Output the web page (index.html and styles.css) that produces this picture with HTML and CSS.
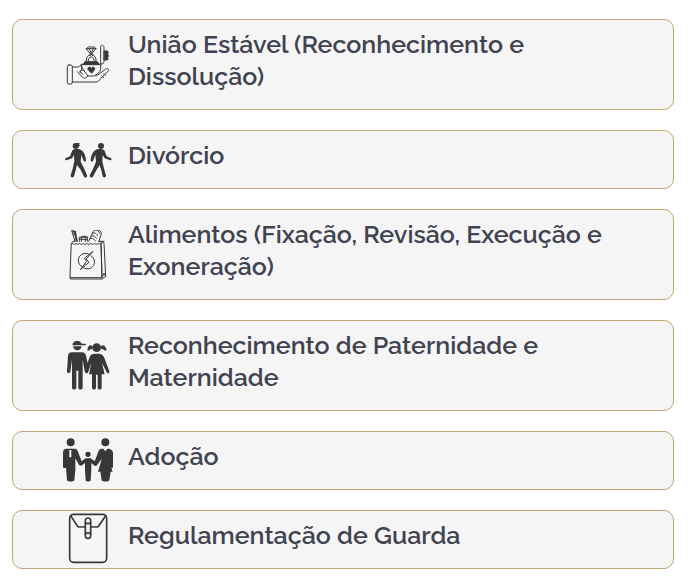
FILE: index.html
```html
<!DOCTYPE html>
<html lang="pt-BR">

<head>
    <meta charset="UTF-8">
    <meta name="viewport" content="width=device-width, initial-scale=1">
    <title>Direito de Família</title>
    <link rel="stylesheet" href="styles.css">
</head>

<body>
    <ul class="servicos">
        <li class="servico">
            <!-- mão com caixa de aliança -->
            <svg class="icone traco" viewBox="24 16 150 150" aria-hidden="true">
                <rect x="37" y="91" width="15" height="57" rx="5" />
                <path d="M52 97H70L81 89M52 142H126C133 139 136 132 141 127L159 110C163 104 158 99 152 103L134 117C129 121 122 124 111 124H97" />
                <path d="M67 111L83 128C90 134 101 127 96 119L87 109C81 104 76 106 75 112L83 118M75 112C78 106 83 103 79 95" />
                <path d="M79 89H137V104C135 113 129 118 122 121M79 89C80 98 83 103 88 108" />
                <path class="cheio" d="M85 89L90 81H127L133 89Z" />
                <path d="M94 79A15 15 0 1 1 123 79M100 79A9 9 0 1 1 117 79" />
                <path d="M94 42L100 37H117L123 42L109 58ZM94 42H123M102 42L109 56L115 42M105 58V63M113 58V63" />
                <path class="cheio" d="M109 115L100 106C95 98 105 94 109 101C113 94 123 98 118 106Z" />
                <path d="M137 88V35C139 29 147 32 147 39V81C147 87 143 88 137 88Z" />
                <path class="cheio" d="M148 49H157C161 50 160 56 157 59C162 62 162 66 157 68C161 72 159 76 156 76H148Z" />
                <path d="M140 124L146 129M146 118L152 122" />
            </svg>
            <h3 class="titulo">União Estável (Reconhecimento e Dissolução)</h3>
        </li>

        <li class="servico">
            <!-- casal se afastando -->
            <svg class="icone" viewBox="24 2 150 150" aria-hidden="true">
                <circle cx="62" cy="35" r="9" />
                <path d="M60 26H74L72 31L76 33L69 38Z" />
                <path d="M52 48C58 43 72 42 78 47C88 53 91 64 93 76C94 82 87 84 85 78L79 61L77 82L87 102L96 123C98 130 90 132 87 127L77 106L66 92L62 108L57 126C55 131 46 130 47 123L53 103L58 81L57 62L51 72L35 78C30 79 28 73 33 71L45 66Z" />
                <circle cx="138" cy="35" r="9" />
                <path d="M148 48C142 43 128 42 122 47C112 53 109 64 107 76C106 82 113 84 115 78L121 61L123 82L115 102L105 121C102 129 110 132 114 127L124 108L134 92L139 108L143 126C145 131 154 130 153 123L147 103L142 81L143 62L149 72L165 78C170 79 172 73 167 71L155 66Z" />
            </svg>
            <h3 class="titulo">Divórcio</h3>
        </li>

        <li class="servico">
            <!-- sacola de compras -->
            <svg class="icone traco" viewBox="24 25 150 150" aria-hidden="true">
                <path d="M50 65H53C55 69 60 69 63 65C66 69 71 69 74 65C77 69 82 69 85 65C88 69 93 69 96 65C99 69 104 69 107 65C110 69 115 69 118 65C121 69 126 69 129 65C132 69 135 67 138 65L141 168H46Z" />
                <path d="M46 168V172H142L152 164L147 64L138 59L141 168L147 155L152 164M50 65L54 59H59M131 59H147" />
                <path d="M60 59L50 26L55 25L66 59M56 39L61 29L63 59M61 29L67 59M52 31L60 29" />
                <path d="M73 59V47H97V59M77 47L81 44H94L98 47M73 53H97M79 50V59M91 50V59" />
                <path d="M101 59L115 29C122 19 139 25 139 36L132 59M112 35C120 31 125 37 128 42M109 43C116 40 121 45 124 50M106 51C113 48 119 53 121 58M120 25C128 24 132 29 134 35" />
                <path d="M103 98A21 21 0 0 0 80 135M86 139A21 21 0 0 0 108 102" />
                <path d="M113 90L88 110L95 119L76 144L102 122L94 113Z" />
            </svg>
            <h3 class="titulo">Alimentos (Fixação, Revisão, Execução e Exoneração)</h3>
        </li>

        <li class="servico">
            <!-- menino e menina -->
            <svg class="icone" viewBox="24 28 150 150" aria-hidden="true">
                <path d="M52 41C53 33 58 29 63 28C64 24 69 24 70 28C75 29 79 33 80 36H91C94 37 93 41 89 41Z" />
                <path d="M54 44H80C78 60 56 60 54 44Z" />
                <path d="M49 62H83C89 63 92 67 93 72L98 94L104 75C107 69 112 66 119 66H134C141 67 144 71 147 76L163 119C165 125 158 128 155 122L141 94L149 128H140V168C140 175 128 175 128 168V129H123V168C123 175 111 175 111 168V128H102L109 93L100 120C98 127 90 126 89 119L83 84V168C83 175 70 175 70 168V117H64V168C64 175 51 175 51 168V84L46 120C44 127 35 125 36 118L39 73C40 66 43 63 49 62Z" />
                <circle cx="125" cy="48" r="13" />
                <path d="M113 44C105 36 98 42 97 56C101 60 104 51 113 51ZM137 44C145 36 152 42 155 56C150 60 146 51 137 51Z" />
            </svg>
            <h3 class="titulo">Reconhecimento de Paternidade e Maternidade</h3>
        </li>

        <li class="servico">
            <!-- família de mãos dadas -->
            <svg class="icone" viewBox="24 18 150 150" aria-hidden="true">
                <circle cx="47" cy="37" r="12" />
                <circle cx="99" cy="73" r="8" />
                <circle cx="151" cy="37" r="12" />
                <path fill-rule="evenodd" d="M32 56H61C66 57 68 62 70 68L80 94L92 85H107L119 94L130 65C132 59 135 56 140 56H162C168 57 173 60 174 68V113H169L173 125H167L163 151C162 156 141 156 140 151L136 125H129L140 87L126 106C123 109 119 108 116 105L109 99V121L107 151C106 156 93 156 92 151L90 121V99L83 104C78 109 74 107 72 104L61 85V120L58 151C57 156 37 156 36 151L33 114H27C24 114 24 112 24 109V68C24 61 27 57 32 56ZM43 60V82H49V60Z" />
                <path class="fundo" d="M144 55L151 64L158 55Z" />
            </svg>
            <h3 class="titulo">Adoção</h3>
        </li>

        <li class="servico">
            <!-- envelope -->
            <svg class="icone traco grosso" viewBox="24 26 150 150" overflow="visible" aria-hidden="true">
                <rect x="44" y="24" width="111" height="144" rx="12" />
                <path d="M47 28L67 59Q69 62 73 62H91M107 62H125Q129 62 131 59L152 28" />
                <rect x="91" y="35" width="16" height="61" rx="8" />
                <path d="M91 49Q99 55 107 49M91 83Q99 76 107 83" />
            </svg>
            <h3 class="titulo">Regulamentação de Guarda</h3>
        </li>
    </ul>
</body>

</html>
```
FILE: styles.css
```css
body {
    margin: 0;
    padding: 19px 20px 19px 12px;
    background-color: #ffffff;
    font-family: Raleway, Lato, sans-serif;
}

.servicos {
    display: flex;
    flex-direction: column;
    gap: 20px;
    margin: 0;
    padding: 0;
    list-style: none;
}

.servico {
    display: flex;
    align-items: center;
    gap: 15px;
    padding: 0 50px;
    background-color: #f5f5f5;
    border: 1px solid #bfa872;
    border-radius: 10px;
}

.icone {
    flex: none;
    width: 50px;
    height: 50px;
    fill: #383838;
}

.traco {
    fill: none;
    stroke: #383838;
    stroke-width: 3;
    stroke-linecap: round;
    stroke-linejoin: round;
}

.grosso {
    stroke-width: 5;
}

.cheio {
    fill: #383838;
}

.fundo {
    fill: #f5f5f5;
}

.titulo {
    margin: 0;
    padding: 8px 0 17px;
    color: #414350;
    font-size: 25px;
    font-weight: 600;
    line-height: 32px;
}
```
